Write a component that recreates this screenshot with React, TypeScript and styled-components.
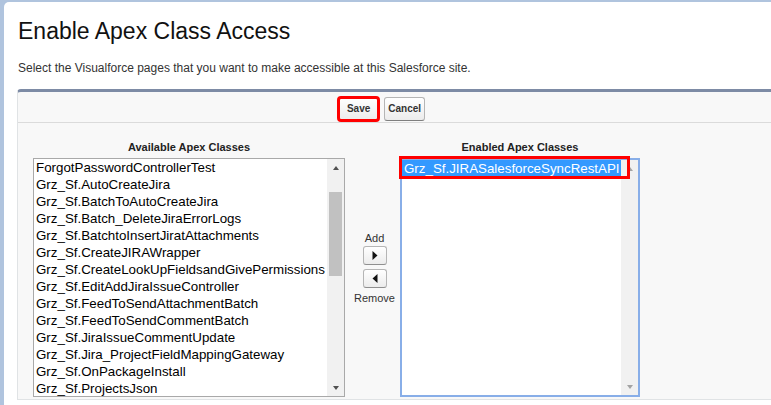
import styled, { createGlobalStyle, css } from "styled-components";

const available = [
  "ForgotPasswordControllerTest",
  "Grz_Sf.AutoCreateJira",
  "Grz_Sf.BatchToAutoCreateJira",
  "Grz_Sf.Batch_DeleteJiraErrorLogs",
  "Grz_Sf.BatchtoInsertJiratAttachments",
  "Grz_Sf.CreateJIRAWrapper",
  "Grz_Sf.CreateLookUpFieldsandGivePermissions",
  "Grz_Sf.EditAddJiraIssueController",
  "Grz_Sf.FeedToSendAttachmentBatch",
  "Grz_Sf.FeedToSendCommentBatch",
  "Grz_Sf.JiraIssueCommentUpdate",
  "Grz_Sf.Jira_ProjectFieldMappingGateway",
  "Grz_Sf.OnPackageInstall",
  "Grz_Sf.ProjectsJson",
];

const enabled = ["Grz_Sf.JIRASalesforceSyncRestAPI"];

// #region styles

const GlobalStyle = createGlobalStyle`
  html, body {
    margin: 0;
    height: 100%;
    overflow: hidden;
    background: #b0c4de;
    font-family: "Liberation Sans", Arial, sans-serif;
  }
  #root {
    height: 100%;
  }
`;

const Page = styled.div`
  box-sizing: border-box;
  height: 100%;
  padding: 2px 0 0 4px;
`;

const Card = styled.div`
  box-sizing: border-box;
  height: 100%;
  overflow: hidden;
  background: #fff;
  border-top-left-radius: 5px;
  padding: 15px 0 0 13px;
`;

const Title = styled.h1`
  margin: 0 0 0 1px;
  font-size: 23px;
  font-weight: normal;
  line-height: 28px;
  color: #111;
`;

const Intro = styled.p`
  margin: 15px 0 0 1px;
  font-size: 12px;
  line-height: 16px;
  color: #333;
`;

const Panel = styled.section`
  margin: 13px -10px 0 0;
  background: #f8f8f8;
  border-top: 3px solid #7d8ba5;
  border-left: 1px solid #e0e3e5;
  border-bottom: 1px solid #e0e3e5;
  border-top-left-radius: 4px;
`;

const ButtonBar = styled.div`
  display: flex;
  justify-content: center;
  gap: 5px;
  padding: 5px 36px 1px 0;
  border-bottom: 1px solid #dbdbdb;
`;

const Button = styled.button<{ $highlight?: boolean }>`
  font-family: "Liberation Sans", Arial, sans-serif;
  font-size: 10px;
  font-weight: bold;
  line-height: 12px;
  color: #333;
  padding: 5px 3px;
  border: 1px solid #b5b5b5;
  border-bottom-color: #7f7f7f;
  border-radius: 3px;
  background: linear-gradient(#ffffff, #ececec);
  ${(p) =>
    p.$highlight &&
    css`
      padding: 5px 8px;
      outline: 3px solid #f00;
      outline-offset: -2px;
    `}
`;

const Columns = styled.div`
  display: grid;
  grid-template-columns: 312px 55px 240px;
  row-gap: 4px;
  padding: 17px 0 2px 15px;
`;

const ColumnTitle = styled.div`
  font-size: 11px;
  font-weight: bold;
  line-height: 14px;
  color: #222;
  text-align: center;
`;

const ListBox = styled.div<{ $focused?: boolean }>`
  position: relative;
  box-sizing: border-box;
  height: 239px;
  display: flex;
  background: #fff;
  border: ${(p) => (p.$focused ? "2px solid #88aee8" : "1px solid #a9a9a9")};
`;

const Options = styled.div`
  flex: 1;
  overflow: hidden;
`;

const Option = styled.div<{ $selected?: boolean }>`
  height: 17px;
  padding-left: 2px;
  font-size: 13.33px;
  line-height: 17px;
  white-space: nowrap;
  color: ${(p) => (p.$selected ? "#fff" : "#000")};
  background: ${(p) => (p.$selected ? "#3399ff" : "transparent")};
`;

const ScrollBar = styled.div`
  width: 17px;
  display: flex;
  flex-direction: column;
  background: #f1f1f1;
`;

const Arrow = styled.div<{ $down?: boolean; $disabled?: boolean }>`
  height: 17px;
  display: flex;
  align-items: center;
  justify-content: center;
  &::before {
    content: "";
    border-left: 3.5px solid transparent;
    border-right: 3.5px solid transparent;
    ${(p) =>
      p.$down
        ? css`border-top: 4px solid ${p.$disabled ? "#a3a3a3" : "#505050"};`
        : css`border-bottom: 4px solid ${p.$disabled ? "#a3a3a3" : "#505050"};`}
  }
`;

const Track = styled.div`
  flex: 1;
`;

const Thumb = styled.div<{ $offset: number; $size: number }>`
  margin: ${(p) => p.$offset}px 2px 0;
  height: ${(p) => p.$size}px;
  background: #c1c1c1;
`;

const Mover = styled.div`
  display: flex;
  flex-direction: column;
  align-items: center;
  padding: 73px 0 0 4px;
  font-size: 11px;
  line-height: 14px;
  color: #333;
`;

const MoveButton = styled.button`
  box-sizing: border-box;
  width: 24px;
  height: 19px;
  margin: 1px 0 3px;
  padding: 0;
  display: flex;
  align-items: center;
  justify-content: center;
  border: 1px solid #b5b5b5;
  border-bottom-color: #8f8f8f;
  border-radius: 3px;
  background: linear-gradient(#ffffff, #ececec);
`;

const Callout = styled.div`
  position: absolute;
  left: -3px;
  top: -4px;
  width: 231px;
  height: 23px;
  box-sizing: border-box;
  border: 3px solid #f00;
  pointer-events: none;
`;

// #endregion

function Triangle({ dir }: { dir: "left" | "right" }) {
  return (
    <svg width="6" height="9" viewBox="0 0 6 9">
      {dir === "right" ? (
        <polygon points="0.5,0 5.5,4.5 0.5,9" fill="#111" />
      ) : (
        <polygon points="5.5,0 0.5,4.5 5.5,9" fill="#111" />
      )}
    </svg>
  );
}

export default function App() {
  return (
    <>
      <GlobalStyle />
      <Page>
        <Card>
          <Title>{"Enable Apex Class Access"}</Title>
          <Intro>
            {
              "Select the Visualforce pages that you want to make accessible at this Salesforce site."
            }
          </Intro>
          <Panel>
            <ButtonBar>
              <Button $highlight>{"Save"}</Button>
              <Button>{"Cancel"}</Button>
            </ButtonBar>
            <Columns>
              <ColumnTitle>{"Available Apex Classes"}</ColumnTitle>
              <div />
              <ColumnTitle>{"Enabled Apex Classes"}</ColumnTitle>

              <ListBox>
                <Options>
                  {available.map((name) => (
                    <Option key={name}>{name}</Option>
                  ))}
                </Options>
                <ScrollBar>
                  <Arrow />
                  <Track>
                    <Thumb $offset={16} $size={84} />
                  </Track>
                  <Arrow $down />
                </ScrollBar>
              </ListBox>

              <Mover>
                <span>{"Add"}</span>
                <MoveButton title="Add">
                  <Triangle dir="right" />
                </MoveButton>
                <MoveButton title="Remove">
                  <Triangle dir="left" />
                </MoveButton>
                <span>{"Remove"}</span>
              </Mover>

              <ListBox $focused>
                <Options>
                  {enabled.map((name) => (
                    <Option key={name} $selected>
                      {name}
                    </Option>
                  ))}
                </Options>
                <ScrollBar>
                  <Arrow $disabled />
                  <Track />
                  <Arrow $down $disabled />
                </ScrollBar>
                <Callout />
              </ListBox>
            </Columns>
          </Panel>
        </Card>
      </Page>
    </>
  );
}
